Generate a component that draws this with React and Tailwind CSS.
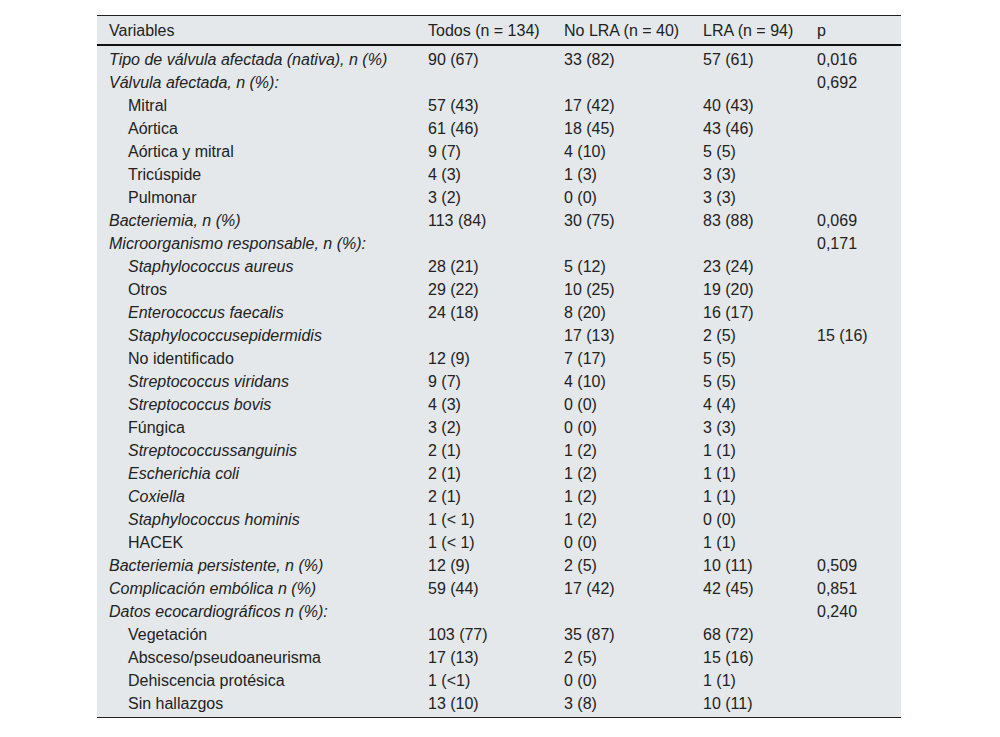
const rows = [
  { v: "Tipo de válvula afectada (nativa), n (%)", it: true, a: "90 (67)", b: "33 (82)", c: "57 (61)", p: "0,016" },
  { v: "Válvula afectada, n (%):", it: true, p: "0,692" },
  { v: "Mitral", ind: true, a: "57 (43)", b: "17 (42)", c: "40 (43)" },
  { v: "Aórtica", ind: true, a: "61 (46)", b: "18 (45)", c: "43 (46)" },
  { v: "Aórtica y mitral", ind: true, a: "9 (7)", b: "4 (10)", c: "5 (5)" },
  { v: "Tricúspide", ind: true, a: "4 (3)", b: "1 (3)", c: "3 (3)" },
  { v: "Pulmonar", ind: true, a: "3 (2)", b: "0 (0)", c: "3 (3)" },
  { v: "Bacteriemia, n (%)", it: true, a: "113 (84)", b: "30 (75)", c: "83 (88)", p: "0,069" },
  { v: "Microorganismo responsable, n (%):", it: true, p: "0,171" },
  { v: "Staphylococcus aureus", ind: true, it: true, a: "28 (21)", b: "5 (12)", c: "23 (24)" },
  { v: "Otros", ind: true, a: "29 (22)", b: "10 (25)", c: "19 (20)" },
  { v: "Enterococcus faecalis", ind: true, it: true, a: "24 (18)", b: "8 (20)", c: "16 (17)" },
  { v: "Staphylococcusepidermidis", ind: true, it: true, b: "17 (13)", c: "2 (5)", p: "15 (16)" },
  { v: "No identificado", ind: true, a: "12 (9)", b: "7 (17)", c: "5 (5)" },
  { v: "Streptococcus viridans", ind: true, it: true, a: "9 (7)", b: "4 (10)", c: "5 (5)" },
  { v: "Streptococcus bovis", ind: true, it: true, a: "4 (3)", b: "0 (0)", c: "4 (4)" },
  { v: "Fúngica", ind: true, a: "3 (2)", b: "0 (0)", c: "3 (3)" },
  { v: "Streptococcussanguinis", ind: true, it: true, a: "2 (1)", b: "1 (2)", c: "1 (1)" },
  { v: "Escherichia coli", ind: true, it: true, a: "2 (1)", b: "1 (2)", c: "1 (1)" },
  { v: "Coxiella", ind: true, it: true, a: "2 (1)", b: "1 (2)", c: "1 (1)" },
  { v: "Staphylococcus hominis", ind: true, it: true, a: "1 (< 1)", b: "1 (2)", c: "0 (0)" },
  { v: "HACEK", ind: true, a: "1 (< 1)", b: "0 (0)", c: "1 (1)" },
  { v: "Bacteriemia persistente, n (%)", it: true, a: "12 (9)", b: "2 (5)", c: "10 (11)", p: "0,509" },
  { v: "Complicación embólica n (%)", it: true, a: "59 (44)", b: "17 (42)", c: "42 (45)", p: "0,851" },
  { v: "Datos ecocardiográficos n (%):", it: true, p: "0,240" },
  { v: "Vegetación", ind: true, a: "103 (77)", b: "35 (87)", c: "68 (72)" },
  { v: "Absceso/pseudoaneurisma", ind: true, a: "17 (13)", b: "2 (5)", c: "15 (16)" },
  { v: "Dehiscencia protésica", ind: true, a: "1 (<1)", b: "0 (0)", c: "1 (1)" },
  { v: "Sin hallazgos", ind: true, a: "13 (10)", b: "3 (8)", c: "10 (11)" },
];

const cols = "grid grid-cols-[319px_136px_139px_114px_96px]";

export default function App() {
  return (
    <div className="w-[1000px] h-[737px] bg-white pt-[15px] pl-[97px] font-['Liberation_Sans',Arial,sans-serif] text-[16px] text-[#222]">
      <div className="w-[804px] bg-[#e4e8eb] border-t border-b border-[#222] pb-[4px]">
        <div className={`${cols} h-[30px] items-center border-b-2 border-[#111] pt-[1px]`}>
          <div className="pl-3">Variables</div>
          <div className="pl-3">Todos (n = 134)</div>
          <div className="pl-3">No LRA (n = 40)</div>
          <div className="pl-3">LRA (n = 94)</div>
          <div className="pl-3">p</div>
        </div>
        {rows.map((r, i) => (
          <div key={i} className={`${cols} h-[23px] items-center leading-none pt-[4px]`}>
            <div className={`${r.ind ? "pl-[31px]" : "pl-3"} ${r.it ? "italic" : ""}`}>{r.v}</div>
            <div className="pl-3">{r.a}</div>
            <div className="pl-3">{r.b}</div>
            <div className="pl-3">{r.c}</div>
            <div className="pl-3">{r.p}</div>
          </div>
        ))}
      </div>
    </div>
  );
}
